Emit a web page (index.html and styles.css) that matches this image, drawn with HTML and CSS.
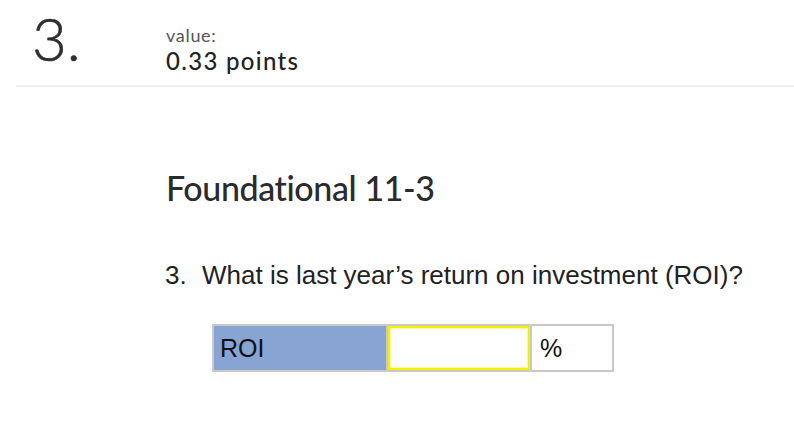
FILE: index.html
```html
<!DOCTYPE html>
<html>
<head>
<meta charset="utf-8">
<link rel="stylesheet" href="styles.css">
</head>
<body>
<div class="header">
  <div class="qnum">3.</div>
  <div class="value">
    <div class="value-label">value:</div>
    <div class="value-points">0.33 points</div>
  </div>
</div>
<div class="content">
  <h1 class="title">Foundational 11-3</h1>
  <p class="question"><span class="qn">3.</span>What is last year’s return on investment (ROI)?</p>
  <div class="answer">
    <div class="cell label-cell">ROI</div>
    <div class="cell input-cell"><div class="input-box"></div></div>
    <div class="cell unit-cell">%</div>
  </div>
</div>
</body>
</html>
```
FILE: styles.css
```css
html, body {
  margin: 0;
  padding: 0;
  background: #fff;
}
body {
  font-family: "Open Sans", Lato, sans-serif;
  color: #333;
  font-variant-ligatures: none;
}
.header {
  display: flex;
  align-items: flex-start;
  margin-left: 16px;
  padding-left: 16px;
  height: 87px;
  border-bottom: 2px solid #eeeeee;
  box-sizing: border-box;
}
.qnum {
  width: 134px;
  font-family: Lato, "Open Sans", sans-serif;
  font-size: 60px;
  font-weight: 300;
  -webkit-text-stroke: 0.6px #2e2e2e;
  line-height: 72px;
  margin-top: 2px;
  color: #2e2e2e;
}
.value {
  padding-top: 24px;
}
.value-label {
  font-family: Lato, "Open Sans", sans-serif;
  font-size: 18px;
  letter-spacing: 0.7px;
  line-height: 22px;
  color: #555;
}
.value-points {
  font-family: Lato, "Open Sans", sans-serif;
  font-size: 24px;
  font-weight: 500;
  letter-spacing: 1.3px;
  line-height: 28px;
  color: #222;
  margin-top: 1px;
}
.content {
  padding-left: 166px;
}
.title {
  margin: 79px 0 0 0;
  font-family: Lato, "Open Sans", sans-serif;
  font-size: 34px;
  font-weight: 500;
  letter-spacing: -0.4px;
  line-height: 44px;
  color: #2b2b2b;
}
.question {
  margin: 50px 0 0 -1px;
  font-family: "Liberation Sans", Arial, sans-serif;
  font-size: 26px;
  line-height: 30px;
  color: #222;
}
.qn {
  display: inline-block;
  width: 37px;
}
.answer {
  display: flex;
  margin: 34px 0 0 46px;
  width: max-content;
  border: 2px solid #c9c9c9;
  font-family: "Liberation Sans", Arial, sans-serif;
  font-size: 25px;
  color: #111;
}
.cell {
  height: 44px;
  box-sizing: border-box;
  display: flex;
  align-items: center;
}
.label-cell {
  width: 172px;
  background: #87a4d3;
  padding-left: 6px;
}
.input-cell {
  width: 144px;
  border-left: 2px solid #c9c9c9;
}
.input-box {
  width: 142px;
  height: 44px;
  border: 2px solid #f5f000;
  box-shadow: inset 0 0 0 1px #fbf7a0;
  box-sizing: border-box;
  background: #fff;
}
.unit-cell {
  width: 82px;
  border-left: 2px solid #c9c9c9;
  padding-left: 8px;
}
```
